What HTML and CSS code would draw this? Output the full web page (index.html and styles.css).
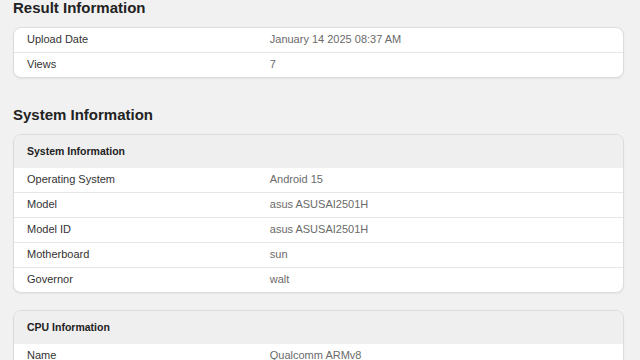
FILE: index.html
```html
<!DOCTYPE html>
<html>
<head>
<meta charset="utf-8">
<link rel="stylesheet" href="styles.css">
</head>
<body>
<div class="page">
  <h2 class="title">Result Information</h2>
  <div class="card">
    <div class="row"><div class="label">Upload Date</div><div class="value">January 14 2025 08:37 AM</div></div>
    <div class="row"><div class="label">Views</div><div class="value">7</div></div>
  </div>

  <h2 class="title title-gap">System Information</h2>
  <div class="card">
    <div class="head">System Information</div>
    <div class="row"><div class="label">Operating System</div><div class="value">Android 15</div></div>
    <div class="row"><div class="label">Model</div><div class="value">asus ASUSAI2501H</div></div>
    <div class="row"><div class="label">Model ID</div><div class="value">asus ASUSAI2501H</div></div>
    <div class="row"><div class="label">Motherboard</div><div class="value">sun</div></div>
    <div class="row"><div class="label">Governor</div><div class="value">walt</div></div>
  </div>

  <div class="card card-gap">
    <div class="head">CPU Information</div>
    <div class="row"><div class="label">Name</div><div class="value">Qualcomm ARMv8</div></div>
  </div>
</div>
</body>
</html>
```
FILE: styles.css
```css
html, body {
  margin: 0;
  padding: 0;
  background: #f1f1f1;
  font-family: "Liberation Sans", Arial, sans-serif;
  overflow: hidden;
}
.page {
  width: 611px;
  padding: 0 0 0 13px;
}
.title {
  margin: 0;
  font-size: 15px;
  line-height: 16px;
  font-weight: bold;
  color: #222;
}
.title-gap {
  margin-top: 29px;
}
.card {
  margin-top: 11px;
  background: #fff;
  border: 1px solid #dcdcdc;
  border-radius: 8px;
  overflow: hidden;
  box-shadow: 0 1px 2px rgba(0,0,0,0.06);
}
.card-gap {
  margin-top: 17px;
}
.head {
  background: #efefef;
  height: 33px;
  line-height: 32px;
  padding-left: 13px;
  font-size: 10.5px;
  font-weight: bold;
  color: #222;
}
.row {
  display: flex;
  height: 24px;
  line-height: 22px;
  align-items: flex-start;
  border-top: 1px solid #e6e6e6;
  font-size: 11px;
}
.card > .row:first-child, .head + .row {
  border-top: none;
}
.label {
  width: 42%;
  padding-left: 13px;
  box-sizing: border-box;
  color: #333;
}
.value {
  color: #6a6a6a;
}
```
